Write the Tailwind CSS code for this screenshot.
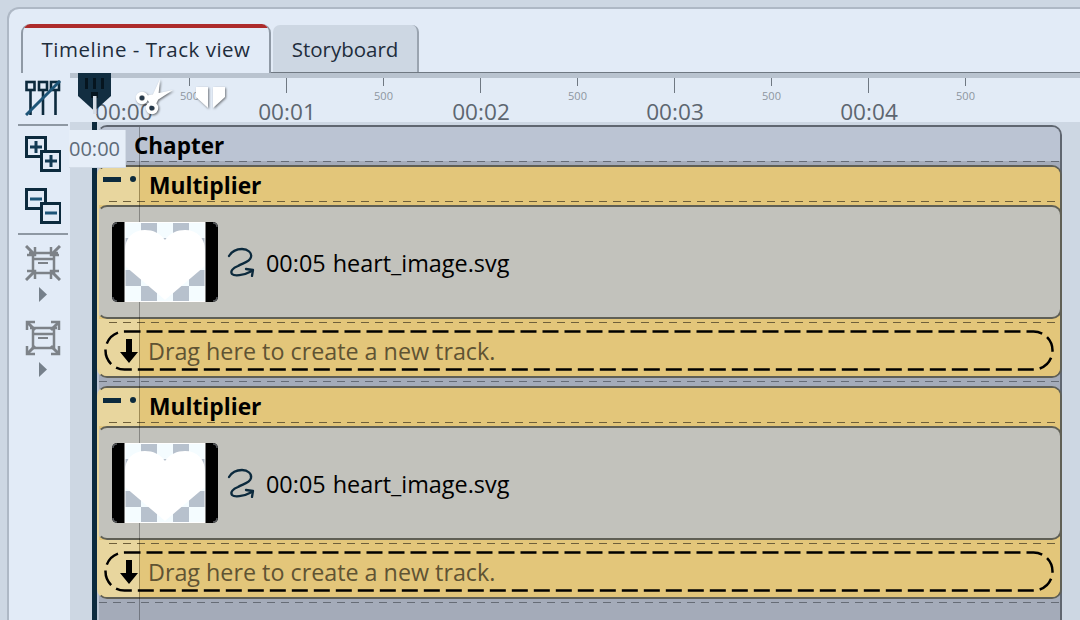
<!DOCTYPE html>
<html><head><meta charset="utf-8"><script src="https://cdn.jsdelivr.net/npm/@tailwindcss/browser@4"></script></head>
<body class="w-[1080px] h-[620px] overflow-hidden bg-[#cdd7e3] font-['Open_Sans','Noto_Sans',sans-serif] relative">
<div class="ml-[7px] mt-[7px] h-[613px] border-l-2 border-t-2 border-[#aeb8c5] rounded-tl-[12px] bg-[#e2ebf7] flex flex-col">
  <!-- tabs -->
  <div class="h-[63px] pt-[15px] pl-[12px] flex items-end gap-[2px] shrink-0 relative z-10">
    <div class="w-[250px] h-[49px] -mb-px bg-[#e2ebf7] border-x-2 border-[#8f99a5] rounded-t-[9px] overflow-hidden flex flex-col">
      <div class="h-[4px] bg-[#ad2b2b] -mx-[2px]"></div>
      <div class="flex-1 flex items-center justify-center pb-[2px] text-[20.5px] tracking-[0.5px] text-[#1e2d3c]">Timeline - Track view</div>
    </div>
    <div class="w-[146px] h-[47px] bg-[#cdd7e3] rounded-t-[7px] border-r-2 border-[#9aa4b0] flex items-center justify-center pt-[2px] text-[20.5px] text-[#1e2d3c]">Storyboard</div>
  </div>
  <div class="flex flex-1 min-h-0">
    <!-- left tool column -->
    <div class="w-[61px] shrink-0 flex flex-col items-start pl-[16px] text-[#0c2a3d]">
      <svg class="mt-[8px] w-[36px] h-[36px]" viewBox="0 0 36 36" fill="none" stroke="#0c2a3d" stroke-width="2.6"><rect x="1.5" y="2" width="8" height="8"/><rect x="14" y="2" width="8" height="8"/><rect x="26" y="2" width="8" height="8"/><path d="M5.5 10v25M18 10v25M30.5 10v25"/><path d="M1 35 35 1" stroke="#1d5578" stroke-width="3"/></svg>
      <div class="mt-[8px] -ml-[7px] w-[50px] h-[2px] bg-[#8e98a3]"></div>
      <svg class="mt-[10px] w-[36px] h-[36px]" viewBox="0 0 36 36" fill="none" stroke="#0c2a3d" stroke-width="3"><rect x="1.5" y="1.5" width="19" height="19" fill="#e2ebf7"/><rect x="16.5" y="15.5" width="19" height="19" fill="#e2ebf7"/><path d="M5 11h12M11 5v12M20 25h12M26 19v12" stroke="#123a54"/></svg>
      <svg class="mt-[16px] w-[36px] h-[36px]" viewBox="0 0 36 36" fill="none" stroke="#0c2a3d" stroke-width="3"><rect x="1.5" y="1.5" width="19" height="19" fill="#e2ebf7"/><rect x="16.5" y="15.5" width="19" height="19" fill="#e2ebf7"/><path d="M5 11h12M20 25h12" stroke="#1d5578"/></svg>
      <div class="mt-[9px] -ml-[7px] w-[50px] h-[2px] bg-[#8e98a3]"></div>
      <svg class="mt-[10px] w-[36px] h-[36px]" viewBox="0 0 36 36" fill="none" stroke="#7d8288" stroke-width="3"><path d="M8 8v20M29 8v20M4 8h29M8 14h21M8 28h21" stroke-width="2.5"/><path d="M13 18h10" stroke-width="2"/><path d="M1 1l9 9M35 1l-9 9M1 35l9-9M35 35l-9-9"/><path d="M2 10h8V2M34 10h-8V2M2 26h8v8M34 26h-8v8" stroke-width="2.5"/></svg>
      <svg class="mt-[6px] ml-[14px] w-[8px] h-[15px]" viewBox="0 0 8 15"><path d="M0 0l8 7.5L0 15z" fill="#76808b"/></svg>
      <svg class="mt-[18px] w-[36px] h-[36px]" viewBox="0 0 36 36" fill="none" stroke="#7d8288" stroke-width="3"><path d="M8 8v20M29 8v20M5 8h27M8 14h21M8 28h21" stroke-width="2.5"/><path d="M13 18h10" stroke-width="2"/><path d="M2 2l8 8M34 2l-8 8M2 34l8-8M34 34l-8-8"/><path d="M2 10V2h8M34 10V2h-8M2 26v8h8M34 26v8h-8" stroke-width="2.5"/></svg>
      <svg class="mt-[6px] ml-[14px] w-[8px] h-[15px]" viewBox="0 0 8 15"><path d="M0 0l8 7.5L0 15z" fill="#76808b"/></svg>
    </div>
    <!-- right -->
    <div class="flex-1 min-w-0 flex flex-col bg-[#cdd7e3]">
      <div class="h-[6px] shrink-0 border-t border-[#6f7882] bg-[#b9c3cf]"></div>
      <!-- ruler -->
      <div class="h-[44px] shrink-0 bg-[#e2ebf6]">
        <div class="flex w-[970px] -ml-[26.5px]">
          <div class="w-[97px] shrink-0 flex flex-col items-center"><div class="w-px h-[15px]"></div></div>
          <div class="w-[97px] shrink-0 flex flex-col items-center"><div class="w-px h-[8px] bg-[#6f7882]"></div><div class="mt-[2px] ml-px text-[11px] leading-[15px] text-[#8d96a0]">500</div></div>
          <div class="w-[97px] shrink-0 flex flex-col items-center"><div class="w-px h-[15px] bg-[#6f7882]"></div><div class="mt-[7px] ml-[2px] text-[22.6px] leading-[24px] text-[#5d6670]">00:01</div></div>
          <div class="w-[97px] shrink-0 flex flex-col items-center"><div class="w-px h-[8px] bg-[#6f7882]"></div><div class="mt-[2px] ml-px text-[11px] leading-[15px] text-[#8d96a0]">500</div></div>
          <div class="w-[97px] shrink-0 flex flex-col items-center"><div class="w-px h-[15px] bg-[#6f7882]"></div><div class="mt-[7px] ml-[2px] text-[22.6px] leading-[24px] text-[#5d6670]">00:02</div></div>
          <div class="w-[97px] shrink-0 flex flex-col items-center"><div class="w-px h-[8px] bg-[#6f7882]"></div><div class="mt-[2px] ml-px text-[11px] leading-[15px] text-[#8d96a0]">500</div></div>
          <div class="w-[97px] shrink-0 flex flex-col items-center"><div class="w-px h-[15px] bg-[#6f7882]"></div><div class="mt-[7px] ml-[2px] text-[22.6px] leading-[24px] text-[#5d6670]">00:03</div></div>
          <div class="w-[97px] shrink-0 flex flex-col items-center"><div class="w-px h-[8px] bg-[#6f7882]"></div><div class="mt-[2px] ml-px text-[11px] leading-[15px] text-[#8d96a0]">500</div></div>
          <div class="w-[97px] shrink-0 flex flex-col items-center"><div class="w-px h-[15px] bg-[#6f7882]"></div><div class="mt-[7px] ml-[2px] text-[22.6px] leading-[24px] text-[#5d6670]">00:04</div></div>
          <div class="w-[97px] shrink-0 flex flex-col items-center"><div class="w-px h-[8px] bg-[#6f7882]"></div><div class="mt-[2px] ml-px text-[11px] leading-[15px] text-[#8d96a0]">500</div></div>
        </div>
      </div>
      <!-- tracks -->
      <div class="flex-1 min-h-0 pl-[22px] overflow-hidden relative">
        <div class="h-[620px] w-[970px] border-l-[5px] pt-[3px] border-[#0c2a3d]">
          <div class="rounded-t-[10px] border-x-2 border-t-2 border-[#5f6670] border-l-[#bbc4d3] bg-[#a4abb9]">
            <div class="h-[34px] bg-[#bbc4d3] rounded-t-[8px] flex items-center pl-[35px] pt-[3px] text-[22.5px] font-bold text-black">Chapter</div>
            <div class="h-[4px] flex flex-col"><div class="h-px bg-[repeating-linear-gradient(90deg,#666c76_0_8px,transparent_8px_14px)]"></div></div>
            <!-- multiplier 1 -->
            <div class="-mx-[2px] rounded-[10px] border-2 border-[#5f5f55] border-l-[#e8d69e] bg-[#e3c67a] overflow-hidden">
              <div class="h-[38px] bg-[linear-gradient(90deg,#e8d69e_40px,#e3c67a_40px)] relative flex items-center pl-[50px] text-[22.8px] font-bold text-black">
                <div class="absolute left-[4px] top-[10px] w-[18px] h-[5px] bg-[#0c2a3d]"></div>
                <div class="absolute left-[31px] top-[9px] w-[6px] h-[6px] rounded-full bg-[#0c2a3d]"></div>
                Multiplier
                <div class="absolute left-[10px] right-[4px] top-[34px] h-px bg-[repeating-linear-gradient(90deg,#6e5f3a_0_8px,transparent_8px_14px)]"></div>
              </div>
              <div class="-mx-[2px] h-[114px] border-2 border-[#5f5f55] border-l-[#c2c2bc] rounded-[10px] bg-[#c2c2bc] flex items-center pl-[13px]">
                <svg class="relative z-10 w-[106px] h-[80px] shrink-0" viewBox="0 0 106 80"><rect width="106" height="80" rx="5" fill="#000"/><path d="M1 5q0-4 4-4M105 5q0-4-4-4M1 75q0 4 4 4M105 75q0 4-4 4" fill="none" stroke="#55585c" stroke-width="1.5"/><rect x="13" y="0" width="80" height="80" fill="#f4fcff"/><path d="M29 0h16v16H29zM61 0h16v16H61zM13 16h16v16H13zM45 16h16v16H45zM77 16h16v16H77zM29 32h16v16H29zM61 32h16v16H61zM13 48h16v16H13zM45 48h16v16H45zM77 48h16v16H77zM29 64h16v16H29zM61 64h16v16H61z" fill="#b7c1cd"/><path d="M53 18C48 11 41 8 33 8 21 8 13 16 13 28v16l40 34 40-34V28C93 16 85 8 73 8c-8 0-15 3-20 10z" fill="#fff"/><rect x="13" y=".5" width="80" height="79" fill="none" stroke="#fff"/></svg>
                <svg class="ml-[9px] w-[30px] h-[30px] shrink-0" viewBox="0 0 30 30" fill="none" stroke="#0c2a3d" stroke-width="2.3" stroke-linecap="round" stroke-linejoin="round"><path d="M2 9C5 4 10 2 15 2c6 0 10 4 9 8-1 5-8 6-13 9-5 2-8 5-6 8 2 2 11 2 20-3"/><path d="M19 22l7 1-1 6"/></svg>
                <div class="ml-[9px] pt-[3px] flex gap-[7px] text-[23.4px] font-medium text-black"><span>00:05</span><span>heart_image.svg</span></div>
              </div>
              <div class="h-[57px] bg-[linear-gradient(90deg,#e8d69e_40px,#e3c67a_40px)] relative">
                <div class="absolute left-[10px] right-[4px] top-[3px] h-px bg-[repeating-linear-gradient(90deg,#6e5f3a_0_8px,transparent_8px_14px)]"></div>
                <div class="absolute left-[5px] top-[11px] w-[950px] h-[41px] flex items-center">
                  <svg class="absolute inset-0 w-[950px] h-[41px]" viewBox="0 0 950 41" fill="none"><rect x="1.5" y="1.5" width="947" height="38" rx="19" stroke="#000" stroke-width="2.5" stroke-dasharray="16 6"/></svg>
                  <svg class="ml-[15px] w-[20px] h-[26px]" viewBox="0 0 20 26"><path d="M7 1h6v13h6L10 25 1 14h6z" fill="#000"/></svg>
                  <div class="ml-[9px] pt-[2px] text-[23.3px] font-medium text-[#5f5333]">Drag here to create a new track.</div>
                </div>
              </div>
            </div>
            <div class="h-[8px] pt-[3px]"><div class="h-px bg-[repeating-linear-gradient(90deg,#666c76_0_8px,transparent_8px_14px)]"></div></div>
            <!-- multiplier 2 -->
            <div class="-mx-[2px] rounded-[10px] border-2 border-[#5f5f55] border-l-[#e8d69e] bg-[#e3c67a] overflow-hidden">
              <div class="h-[38px] bg-[linear-gradient(90deg,#e8d69e_40px,#e3c67a_40px)] relative flex items-center pl-[50px] text-[22.8px] font-bold text-black">
                <div class="absolute left-[4px] top-[10px] w-[18px] h-[5px] bg-[#0c2a3d]"></div>
                <div class="absolute left-[31px] top-[9px] w-[6px] h-[6px] rounded-full bg-[#0c2a3d]"></div>
                Multiplier
                <div class="absolute left-[10px] right-[4px] top-[34px] h-px bg-[repeating-linear-gradient(90deg,#6e5f3a_0_8px,transparent_8px_14px)]"></div>
              </div>
              <div class="-mx-[2px] h-[114px] border-2 border-[#5f5f55] border-l-[#c2c2bc] rounded-[10px] bg-[#c2c2bc] flex items-center pl-[13px]">
                <svg class="relative z-10 w-[106px] h-[80px] shrink-0" viewBox="0 0 106 80"><rect width="106" height="80" rx="5" fill="#000"/><path d="M1 5q0-4 4-4M105 5q0-4-4-4M1 75q0 4 4 4M105 75q0 4-4 4" fill="none" stroke="#55585c" stroke-width="1.5"/><rect x="13" y="0" width="80" height="80" fill="#f4fcff"/><path d="M29 0h16v16H29zM61 0h16v16H61zM13 16h16v16H13zM45 16h16v16H45zM77 16h16v16H77zM29 32h16v16H29zM61 32h16v16H61zM13 48h16v16H13zM45 48h16v16H45zM77 48h16v16H77zM29 64h16v16H29zM61 64h16v16H61z" fill="#b7c1cd"/><path d="M53 18C48 11 41 8 33 8 21 8 13 16 13 28v16l40 34 40-34V28C93 16 85 8 73 8c-8 0-15 3-20 10z" fill="#fff"/><rect x="13" y=".5" width="80" height="79" fill="none" stroke="#fff"/></svg>
                <svg class="ml-[9px] w-[30px] h-[30px] shrink-0" viewBox="0 0 30 30" fill="none" stroke="#0c2a3d" stroke-width="2.3" stroke-linecap="round" stroke-linejoin="round"><path d="M2 9C5 4 10 2 15 2c6 0 10 4 9 8-1 5-8 6-13 9-5 2-8 5-6 8 2 2 11 2 20-3"/><path d="M19 22l7 1-1 6"/></svg>
                <div class="ml-[9px] pt-[3px] flex gap-[7px] text-[23.4px] font-medium text-black"><span>00:05</span><span>heart_image.svg</span></div>
              </div>
              <div class="h-[57px] bg-[linear-gradient(90deg,#e8d69e_40px,#e3c67a_40px)] relative">
                <div class="absolute left-[10px] right-[4px] top-[3px] h-px bg-[repeating-linear-gradient(90deg,#6e5f3a_0_8px,transparent_8px_14px)]"></div>
                <div class="absolute left-[5px] top-[11px] w-[950px] h-[41px] flex items-center">
                  <svg class="absolute inset-0 w-[950px] h-[41px]" viewBox="0 0 950 41" fill="none"><rect x="1.5" y="1.5" width="947" height="38" rx="19" stroke="#000" stroke-width="2.5" stroke-dasharray="16 6"/></svg>
                  <svg class="ml-[15px] w-[20px] h-[26px]" viewBox="0 0 20 26"><path d="M7 1h6v13h6L10 25 1 14h6z" fill="#000"/></svg>
                  <div class="ml-[9px] pt-[2px] text-[23.3px] font-medium text-[#5f5333]">Drag here to create a new track.</div>
                </div>
              </div>
            </div>
            <div class="h-[30px] pt-[3px]"><div class="h-px bg-[repeating-linear-gradient(90deg,#666c76_0_8px,transparent_8px_14px)]"></div></div>
          </div>
        </div>
      </div>
    </div>
  </div>
</div>
<!-- overlays -->
<div class="absolute left-[139px] top-[127px] w-px h-[493px] bg-black/30"></div>
<div class="absolute left-[95px] top-[100px] text-[22.6px] leading-[24px] text-[#5d6670]">00:00</div>
<svg class="absolute left-[78px] top-[72px] w-[33px] h-[44px]" viewBox="0 0 33 44"><path d="M0 0h33v24L16.5 39 0 24z" fill="#122e41"/><path d="M8.5 6v11M16.5 6v11M24.5 6v11" stroke="#06151f" stroke-width="3"/><rect x="13" y="20" width="7" height="6" fill="#06151f"/><rect x="15" y="24" width="3.5" height="18" fill="#d5dde6"/></svg>
<svg class="absolute left-[133px] top-[76px] w-[44px] h-[44px] drop-shadow-[1px_1px_1px_rgba(0,0,0,0.55)]" viewBox="0 0 44 44"><path d="M16 27 27 3l-2 21-4 8zM12 20l28-6-17 11-7 1z" fill="#fff"/><circle cx="9" cy="22" r="4.5" fill="none" stroke="#fff" stroke-width="3.5"/><circle cx="19" cy="32" r="4.5" fill="none" stroke="#fff" stroke-width="3.5"/><circle cx="9" cy="22" r="2.3" fill="#26394a"/><circle cx="19" cy="32" r="2.3" fill="#26394a"/></svg>
<svg class="absolute left-[195px] top-[86px] w-[32px] h-[25px] drop-shadow-[1px_1px_1px_rgba(0,0,0,0.5)]" viewBox="0 0 32 25"><path d="M1 1h12v21L1 11z" fill="#fff"/><path d="M18 1h12v10L18 22z" fill="#fff"/></svg>
<div class="absolute left-[69px] top-[130px] w-[57px] h-[38px] bg-[#e6eef8] border-r border-b border-[#d3dce7] flex items-center justify-center pr-[5px] text-[20px] text-[#5e6b78]">00:00</div>
</body></html>
